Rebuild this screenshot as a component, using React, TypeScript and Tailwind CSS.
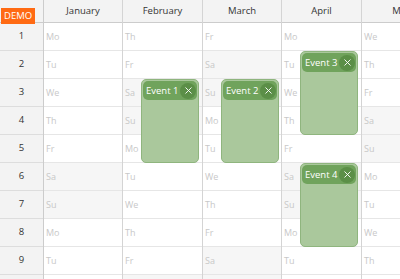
import React from 'react';
import { X } from 'lucide-react';

type Ev = { id: number; text: string; month: number; start: number; end: number };

const months = [
  { name: 'January', first: 0, width: 'w-[79px]' },
  { name: 'February', first: 3, width: 'w-[80px]' },
  { name: 'March', first: 4, width: 'w-[79px]' },
  { name: 'April', first: 0, width: 'w-[80px]' },
  { name: 'May', first: 2, width: 'w-[80px]' },
];

const dayNames = ['Mo', 'Tu', 'We', 'Th', 'Fr', 'Sa', 'Su'];

const events: Ev[] = [
  { id: 1, text: 'Event 1', month: 1, start: 3, end: 5 },
  { id: 2, text: 'Event 2', month: 2, start: 3, end: 5 },
  { id: 3, text: 'Event 3', month: 3, start: 2, end: 4 },
  { id: 4, text: 'Event 4', month: 3, start: 6, end: 8 },
];

// 9 full rows, plus the top of the 10th peeking in at the bottom edge
const days = Array.from({ length: 9 }, (_, i) => i + 1);

const EventBox: React.FC<{ ev: Ev }> = ({ ev }) => (
  <div
    className="absolute left-[18px] w-[58px] rounded-[5px] border border-[#8fb57e] bg-[#aac89c] p-[1px]"
    style={{ top: 23 + (ev.start - 1) * 28, height: (ev.end - ev.start + 1) * 28 }}
  >
    <div className="flex h-[19px] items-center justify-between rounded-[5px] bg-[#70a35c] pl-[3px] pr-[1px]">
      <span className="whitespace-nowrap text-[9.5px] leading-none text-white">{ev.text}</span>
      <span className="flex h-[16px] w-[16px] items-center justify-center rounded-full bg-[#5b8f47]">
        <X className="h-[11px] w-[11px] text-white" strokeWidth={2} />
      </span>
    </div>
  </div>
);

const App: React.FC = () => {
  return (
    <div className="flex h-[279px] w-[400px] overflow-hidden bg-white font-['Open_Sans',sans-serif] text-[#333]">
      {/* row headers */}
      <div className="flex w-[44px] shrink-0 flex-col border-r border-[#ccc] bg-[#f3f3f3]">
        <div className="h-[23px] shrink-0 border-b border-[#ccc] p-[1px]">
          <span className="inline-block bg-[#ff6a13] px-[3px] text-[9.5px] leading-[16px] text-white">DEMO</span>
        </div>
        {days.map(d => (
          <div key={d} className="flex h-[28px] shrink-0 items-center justify-center border-b border-[#ddd] text-[9.5px]">
            {d}
          </div>
        ))}
        <div className="h-[28px] shrink-0" />
      </div>

      {months.map((m, mi) => (
        <div key={m.name} className={`relative flex ${m.width} shrink-0 flex-col border-r border-[#d4d4d4]`}>
          <div className="flex h-[23px] shrink-0 items-center justify-center border-b border-[#ccc] bg-[#f3f3f3] text-[9.5px]">
            {m.name}
          </div>
          {days.map(d => {
            const wd = (m.first + d - 1) % 7;
            const weekend = wd >= 5;
            return (
              <div
                key={d}
                className={`flex h-[28px] shrink-0 items-center border-b border-[#e6e6e6] pl-[2px] text-[9px] text-[#c8c8c8] ${
                  weekend ? 'bg-[#f6f6f6]' : 'bg-white'
                }`}
              >
                {dayNames[wd]}
              </div>
            );
          })}
          <div className={`h-[28px] shrink-0 ${(m.first + 9) % 7 >= 5 ? 'bg-[#f6f6f6]' : 'bg-white'}`} />
          {events
            .filter(e => e.month === mi)
            .map(e => (
              <EventBox key={e.id} ev={e} />
            ))}
        </div>
      ))}
    </div>
  );
};

export default App;
